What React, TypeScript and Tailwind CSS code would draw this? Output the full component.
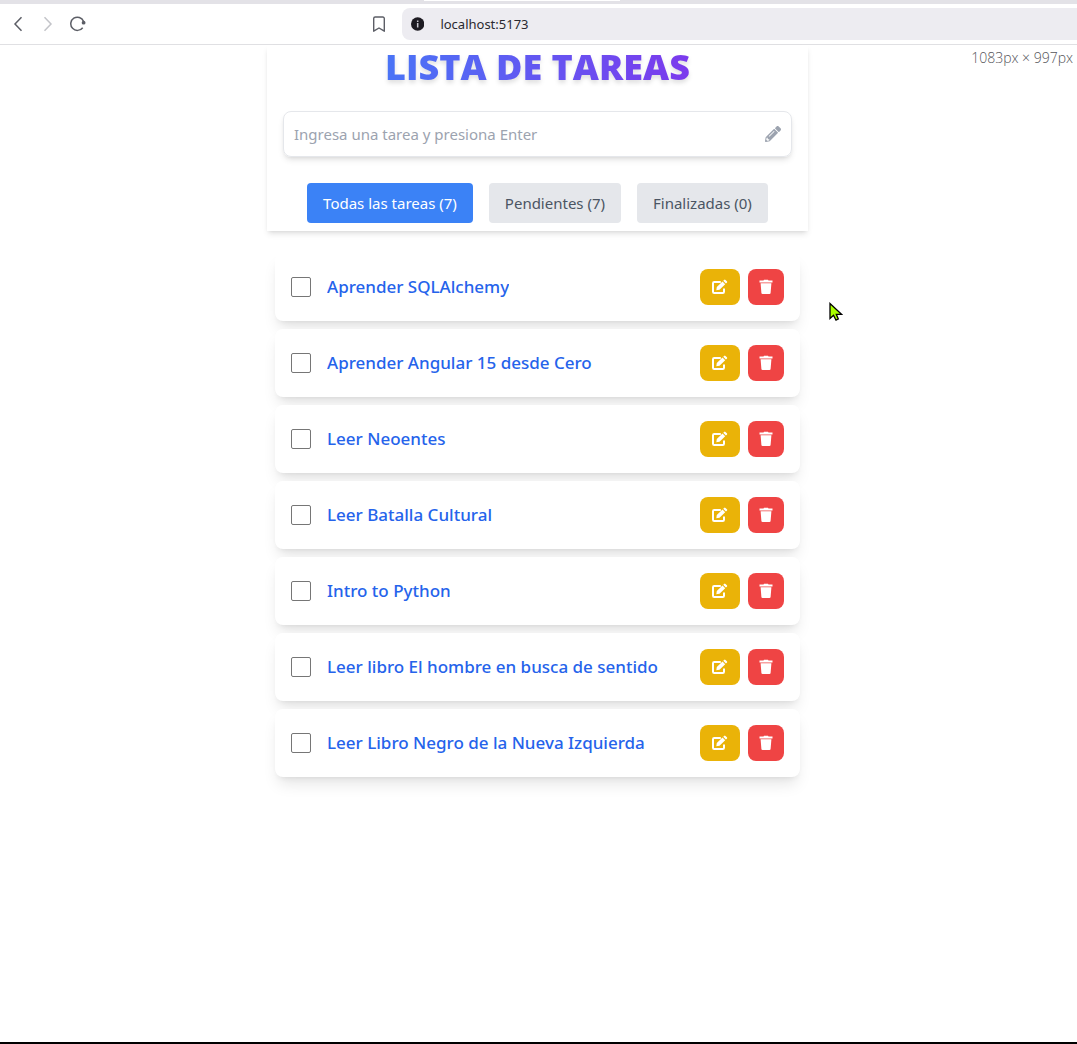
import { useState } from 'react';
import { FaPencilAlt } from 'react-icons/fa';

const initialTasks = [
  'Aprender SQLAlchemy',
  'Aprender Angular 15 desde Cero',
  'Leer Neoentes',
  'Leer Batalla Cultural',
  'Intro to Python',
  'Leer libro El hombre en busca de sentido',
  'Leer Libro Negro de la Nueva Izquierda',
];

function BrowserBar() {
  return (
    <header className="shrink-0">
      <div className="h-1 bg-[#e3e2e7]">
        <div className="ml-[424px] h-px w-[196px] bg-white" />
      </div>
      <div className="flex h-[41px] items-center border-b border-[#e0e0e3] bg-white text-[#5c5e66]">
        <button type="button" aria-label="Atrás" className="ml-2 flex h-8 w-5 items-center justify-center">
          <svg width="10" height="16" viewBox="0 0 10 16" fill="none" stroke="currentColor" strokeWidth="1.5">
            <path d="M8.5 1.2 2 8l6.5 6.8" />
          </svg>
        </button>
        <button type="button" aria-label="Adelante" className="ml-2.5 flex h-8 w-5 items-center justify-center text-[#c3c4c9]">
          <svg width="10" height="16" viewBox="0 0 10 16" fill="none" stroke="currentColor" strokeWidth="1.5">
            <path d="M1.5 1.2 8 8l-6.500 6.800" />
          </svg>
        </button>
        <button type="button" aria-label="Recargar" className="ml-2.5 flex h-8 w-5 items-center justify-center">
          <svg width="16" height="16" viewBox="0 0 16 16" fill="none" stroke="currentColor" strokeWidth="1.5">
            <path d="M12.700 11.700A6.600 6.600 0 1 1 13.500 5.300" />
            <circle cx="13.600" cy="6.700" r="1.900" fill="currentColor" stroke="none" />
          </svg>
        </button>
        <button type="button" aria-label="Guardar marcador" className="ml-[281px] flex h-8 w-5 items-center justify-center">
          <svg width="14" height="18" viewBox="0 0 14 18" fill="none" stroke="currentColor" strokeWidth="1.4" strokeLinejoin="round">
            <path d="M1.700 3.500a1.500 1.500 0 0 1 1.500-1.500h7.600a1.500 1.500 0 0 1 1.500 1.500V16.200L7 13l-5.300 3.200z" />
          </svg>
        </button>
        <label className="ml-[13px] flex h-8 flex-1 items-center rounded-l-lg bg-[#edecf1] pl-[9px]">
          <svg width="14" height="14" viewBox="0 0 14 14" aria-hidden="true">
            <circle cx="7" cy="7" r="7" fill="#1d1b22" />
            <path d="M6.200 3.300h1.600v1.500H6.200zM6.200 6h1.600v4.600H6.200z" fill="#c9c8cf" />
          </svg>
          <input
            aria-label="Dirección"
            defaultValue="localhost:5173"
            className="ml-4 w-full bg-transparent pt-px text-[13px] text-[#2a2930] outline-none"
          />
        </label>
      </div>
    </header>
  );
}

function EditIcon() {
  return (
    <svg width="18" height="16" viewBox="0 0 18 16" aria-hidden="true">
      <path
        d="M9.800 3H3.200a1.200 1.200 0 0 0-1.200 1.200v8.600A1.200 1.200 0 0 0 3.200 14h8.600a1.200 1.200 0 0 0 1.200-1.200V9.500"
        fill="none"
        stroke="currentColor"
        strokeWidth="2"
      />
      <path d="M5.300 11.200l.5-3.100 5.700-5.600 2.700 2.700-5.700 5.600zM12.200 1.800l.9-.9a1 1 0 0 1 1.400 0l1.400 1.400a1 1 0 0 1 0 1.400l-1 .9z" fill="currentColor" />
    </svg>
  );
}

function TrashIcon() {
  return (
    <svg width="14" height="16" viewBox="0 0 14 16" fill="currentColor" aria-hidden="true">
      <path d="M.500 1.600H4.500L5 .700h4l.5.900h4v1.900H.500zM1.600 4.200h10.800l-.8 9.700a1.200 1.200 0 0 1-1.200 1.100H3.600a1.200 1.200 0 0 1-1.200-1.100z" />
    </svg>
  );
}

function TaskRow({ text }: { text: string }) {
  return (
    <li className="flex h-[68px] items-center rounded-lg bg-white px-4 shadow-lg">
      <label className="flex min-w-0 flex-1 items-center gap-4">
        <input
          type="checkbox"
          className="size-5 shrink-0 appearance-none rounded-[2px] border border-[#767676] bg-white checked:bg-[#3b82f6]"
        />
        <span className="truncate text-[17px] leading-7 font-medium text-[#2563eb]">{text}</span>
      </label>
      <div className="flex gap-2 text-white">
        <button type="button" aria-label={`Editar ${text}`} className="flex h-9 w-10 items-center justify-center rounded-lg bg-[#eab308]">
          <EditIcon />
        </button>
        <button type="button" aria-label={`Eliminar ${text}`} className="flex size-9 items-center justify-center rounded-lg bg-[#ef4444]">
          <TrashIcon />
        </button>
      </div>
    </li>
  );
}

function Pointer() {
  return (
    <svg
      className="pointer-events-none absolute top-[257px] left-[829px]"
      width="14"
      height="20"
      viewBox="0 0 14 20"
      aria-hidden="true"
    >
      <path d="M1 1.500V16.500L4.500 13.200 7 18.200 9.300 17 7.300 12.300H12.500z" fill="#aaff00" stroke="#000" strokeWidth="1.3" />
    </svg>
  );
}

export default function App() {
  const [filter, setFilter] = useState(0);
  const filters = ['Todas las tareas (7)', 'Pendientes (7)', 'Finalizadas (0)'];

  return (
    <div className="flex min-h-screen flex-col border-b-2 border-black bg-white font-['Noto_Sans','Open_Sans',sans-serif]">
      <BrowserBar />
      <div className="relative flex-1 pr-0.5">
        <div className="absolute top-[3px] right-1 font-['Open_Sans',sans-serif] text-[14px] leading-5 font-light text-[#55555a]">
          1083px × 997px
        </div>
        <main className="mx-auto w-full max-w-[541px]">
          <section className="px-4 pt-0.5 pb-2 shadow-md">
            <h1 className="text-center font-['Open_Sans',sans-serif] text-4xl leading-10 font-extrabold">
              <span className="bg-[linear-gradient(to_right,#4a74f6,#7c3aed)] bg-clip-text text-transparent drop-shadow-[0_3px_2px_rgb(0_0_0/0.12)]">
                LISTA DE TAREAS
              </span>
            </h1>
            <label className="mt-6 flex h-[46px] items-center rounded-lg border border-gray-200 px-2.5 shadow-md">
              <input
                aria-label="Nueva tarea"
                placeholder="Ingresa una tarea y presiona Enter"
                className="w-full text-[15px] outline-none placeholder:text-[#9ca3af]"
              />
              <FaPencilAlt size={16} className="shrink-0 text-[#9ca3af]" />
            </label>
            <div className="mt-[26px] flex justify-center gap-4">
              {filters.map((name, i) => (
                <button
                  key={name}
                  type="button"
                  onClick={() => setFilter(i)}
                  className={`h-10 rounded px-4 text-[15px] whitespace-nowrap ${
                    i === filter ? 'bg-[#3b82f6] text-white' : 'bg-[#e5e7eb] text-[#4b5563]'
                  }`}
                >
                  {name}
                </button>
              ))}
            </div>
          </section>
          <ul className="mt-[22px] flex flex-col gap-2 px-2">
            {initialTasks.map((t) => (
              <TaskRow key={t} text={t} />
            ))}
          </ul>
        </main>
        <Pointer />
      </div>
    </div>
  );
}
